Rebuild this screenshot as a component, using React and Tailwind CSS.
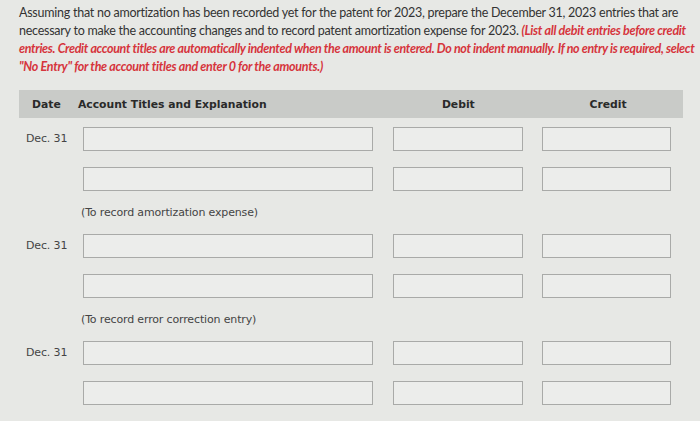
export default function App() {
  const groups = [
    { date: "Dec. 31", note: "(To record amortization expense)" },
    { date: "Dec. 31", note: "(To record error correction entry)" },
    { date: "Dec. 31", note: null },
  ];

  return (
    <div className="w-[700px] h-[421px] overflow-hidden bg-[#e7e8e5] text-[#333333]">
      <div className="pl-[19px] pt-[4px] font-['Lato',sans-serif] text-[12.5px] leading-[18px] tracking-[-0.25px] whitespace-nowrap">
        <div>Assuming that no amortization has been recorded yet for the patent for 2023, prepare the December 31, 2023 entries that are</div>
        <div>
          necessary to make the accounting changes and to record patent amortization expense for 2023.{" "}
          <span className="text-[#d6343c] italic font-bold tracking-[-0.3px]">(List all debit entries before credit</span>
        </div>
        <div className="text-[#d6343c] italic font-bold tracking-[-0.34px]">
          entries. Credit account titles are automatically indented when the amount is entered. Do not indent manually. If no entry is required, select
        </div>
        <div className="text-[#d6343c] italic font-bold tracking-[-0.3px]">"No Entry" for the account titles and enter 0 for the amounts.)</div>
      </div>

      <div className="ml-[19px] mt-[14px] w-[664px] h-[28px] bg-[#c9cbc8] flex items-center pt-[2px] font-['DejaVu_Sans',sans-serif] text-[10.8px] font-bold text-[#2a2a2a]">
        <div className="pl-[13px] w-[59px]">Date</div>
        <div className="w-[306px]">Account Titles and Explanation</div>
        <div className="w-[150px] text-center">Debit</div>
        <div className="w-[150px] text-center">Credit</div>
      </div>

      <div className="mt-[9px] font-['DejaVu_Sans',sans-serif] text-[11px] tracking-[-0.15px] text-[#444444]">
        {groups.map((g, i) => (
          <div key={i} className="mb-[13px]">
            <div className="flex items-center h-[24px]">
              <div className="w-[83px] pl-[26px]">{g.date}</div>
              <Field />
            </div>
            <div className="flex items-center h-[24px] mt-[16px]">
              <div className="w-[83px]" />
              <Field />
            </div>
            {g.note && (
              <div className="pl-[81px] mt-[14px] h-[16px] leading-[16px]">{g.note}</div>
            )}
          </div>
        ))}
      </div>
    </div>
  );
}

function Field() {
  return (
    <>
      <div className="w-[290px] h-[24px] border border-[#a9aaa8] bg-[#ecedeb]" />
      <div className="ml-[20px] w-[130px] h-[24px] border border-[#a9aaa8] bg-[#ecedeb]" />
      <div className="ml-[19px] w-[129px] h-[24px] border border-[#a9aaa8] bg-[#ecedeb]" />
    </>
  );
}
